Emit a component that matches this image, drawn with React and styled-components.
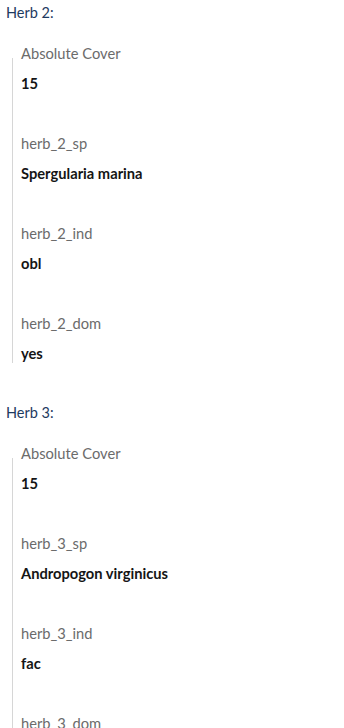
import React from "react";
import styled, { createGlobalStyle } from "styled-components";

const GlobalStyle = createGlobalStyle`
  body {
    margin: 0;
    background: #ffffff;
    font-family: Lato, "Noto Sans", sans-serif;
  }
`;

const Page = styled.div`
  display: flex;
  flex-direction: column;
  gap: 37px;
`;

const Section = styled.section`
  display: flex;
  flex-direction: column;
`;

const Title = styled.div`
  padding: 3px 6px;
  line-height: 20px;
  font-size: 14.5px;
  color: #1e3a5f;
`;

const Group = styled.div`
  position: relative;
  margin: 17px 0 0 12px;
  padding-left: 9px;
  display: flex;
  flex-direction: column;
  gap: 40px;
  &::before {
    content: "";
    position: absolute;
    left: 0;
    top: 15px;
    bottom: 0;
    width: 1px;
    background: #d6d6d6;
  }
`;

const Field = styled.div`
  display: flex;
  flex-direction: column;
  gap: 10px;
`;

const Label = styled.span`
  line-height: 20px;
  font-size: 14.7px;
  color: #6b6b6b;
`;

const Value = styled.span`
  line-height: 20px;
  font-size: 14.7px;
  font-weight: 700;
  color: #151515;
`;

const herbs = [
  {
    title: "Herb 2:",
    fields: [
      ["Absolute Cover", "15"],
      ["herb_2_sp", "Spergularia marina"],
      ["herb_2_ind", "obl"],
      ["herb_2_dom", "yes"],
    ],
  },
  {
    title: "Herb 3:",
    fields: [
      ["Absolute Cover", "15"],
      ["herb_3_sp", "Andropogon virginicus"],
      ["herb_3_ind", "fac"],
      ["herb_3_dom", "no"],
    ],
  },
];

export default function App() {
  return (
    <>
      <GlobalStyle />
      <Page>
        {herbs.map((herb) => (
          <Section key={herb.title}>
            <Title>{herb.title}</Title>
            <Group>
              {herb.fields.map(([label, value]) => (
                <Field key={label}>
                  <Label>{label}</Label>
                  <Value>{value}</Value>
                </Field>
              ))}
            </Group>
          </Section>
        ))}
      </Page>
    </>
  );
}
